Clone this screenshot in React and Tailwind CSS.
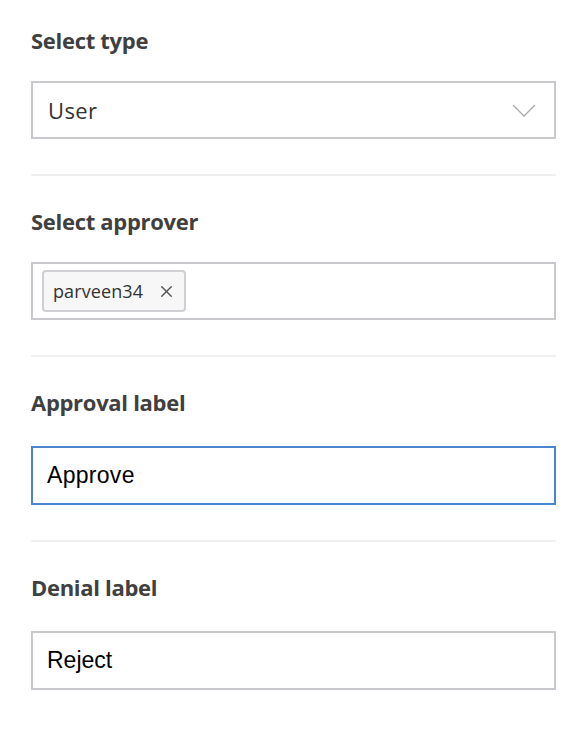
import { X } from 'lucide-react'

const labelFont = { fontFamily: '"Open Sans", Lato, sans-serif' }
const bodyFont = { fontFamily: '"Open Sans", Lato, sans-serif' }

function Label({ children }) {
  return (
    <div className="text-[22px] leading-[24px] font-bold text-[#404040] tracking-[-0.3px]" style={labelFont}>
      {children}
    </div>
  )
}

function Divider() {
  return <div className="h-[2px] bg-[#f0f0f0] mt-[35px] mb-[33px]" />
}

export default function App() {
  return (
    <div className="bg-white min-h-screen pl-[31px] pr-[30px] pt-[28px] font-['Liberation_Sans',Arial,sans-serif]">
      {/* Select type */}
      <Label>Select type</Label>
      <div className="mt-[29px] h-[58px] border-2 border-[#c8c9cc] flex items-center justify-between pl-[15px] pr-[18px]">
        <span className="text-[22px] text-[#333] tracking-[0.4px]" style={bodyFont}>User</span>
        <svg width="24" height="13" viewBox="0 0 24 13" fill="none">
          <path d="M1 1l11 11L23 1" stroke="#a9abb0" strokeWidth="1.3" />
        </svg>
      </div>

      <Divider />

      {/* Select approver */}
      <Label>Select approver</Label>
      <div className="mt-[29px] h-[58px] border-2 border-[#c8c9cc] flex items-center pl-[9px]">
        <div className="h-[42px] w-[144px] flex items-center justify-between border-2 border-[#cfd0d3] rounded-[4px] bg-[#f7f7f7] pl-[9px] pr-[8px]">
          <span className="text-[18px] text-[#333] tracking-[0.1px]" style={bodyFont}>parveen34</span>
          <X size={19} strokeWidth={1.8} color="#555" />
        </div>
      </div>

      <Divider />

      {/* Approval label */}
      <Label>Approval label</Label>
      <div className="mt-[32px] h-[59px] border-2 border-[#4a86d0] flex items-center pl-[14px]">
        <span className="text-[23px] text-black tracking-[0.3px]">Approve</span>
      </div>

      <Divider />

      {/* Denial label */}
      <Label>Denial label</Label>
      <div className="mt-[32px] h-[59px] border-2 border-[#c8c9cc] flex items-center pl-[14px]">
        <span className="text-[23px] text-black">Reject</span>
      </div>
    </div>
  )
}
